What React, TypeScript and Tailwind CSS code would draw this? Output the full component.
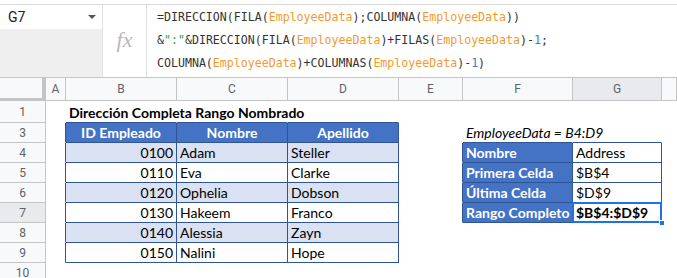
import React from "react";

type Tok = [string, string];
const D = "text-[#333333]";
const O = "text-[#f29a2e]";
const G = "text-[#2e9a44]";
const B = "text-[#3c78d8]";

const formula: Tok[][] = [
  [["=DIRECCION(FILA(", D], ["EmployeeData", O], [");COLUMNA(", D], ["EmployeeData", O], ["))", D]],
  [["&", D], ['":"', G], ["&DIRECCION(FILA(", D], ["EmployeeData", O], [")+FILAS(", D], ["EmployeeData", O], [")-", D], ["1", B], [";", D]],
  [["COLUMNA(", D], ["EmployeeData", O], [")+COLUMNAS(", D], ["EmployeeData", O], [")-", D], ["1", B], [")", D]],
];

const colDefs = [
  { k: "A", w: "w-[20px]" },
  { k: "B", w: "w-[111px]" },
  { k: "C", w: "w-[111px]" },
  { k: "D", w: "w-[111px]" },
  { k: "E", w: "w-[64px]" },
  { k: "F", w: "w-[110px]" },
  { k: "G", w: "w-[89px]" },
  { k: "H", w: "flex-1" },
];

const people = [
  ["0100", "Adam", "Steller"],
  ["0110", "Eva", "Clarke"],
  ["0120", "Ophelia", "Dobson"],
  ["0130", "Hakeem", "Franco"],
  ["0140", "Alessia", "Zayn"],
  ["0150", "Nalini", "Hope"],
];

const info = [
  ["Nombre", "Address"],
  ["Primera Celda", "$B$4"],
  ["Última Celda", "$D$9"],
  ["Rango Completo", "$B$4:$D$9"],
];

type Cell = { text?: string; cls?: string; br?: boolean; bb?: boolean; sel?: boolean };

function cellFor(row: number, col: string): Cell {
  const c: Cell = {};
  if (row === 1) {
    if (col === "B") c.text = "Dirección Completa Rango Nombrado", c.cls = "font-bold text-[13.6px] overflow-visible";
    if (["B", "C", "D"].includes(col)) c.bb = true;
  }
  if (row >= 3 && row <= 9) {
    if (col === "A") c.br = true;
    if (["B", "C", "D"].includes(col)) {
      c.br = true;
      c.bb = true;
    }
  }
  if (row === 3) {
    const h: Record<string, string> = { B: "ID Empleado", C: "Nombre", D: "Apellido" };
    if (h[col]) {
      c.text = h[col];
      c.cls = "bg-[#4472c4] text-white font-bold text-[13.6px] justify-center";
    }
    if (col === "F") c.text = "EmployeeData = B4:D9", c.cls = "italic overflow-visible";
    if (col === "F" || col === "G") c.bb = true;
  }
  if (row >= 4 && row <= 9) {
    const p = people[row - 4];
    const fill = row % 2 === 0 ? "bg-[#d9e1f2]" : "bg-white";
    if (col === "B") c.text = p[0], c.cls = `${fill} justify-end`;
    if (col === "C") c.text = p[1], c.cls = fill;
    if (col === "D") c.text = p[2], c.cls = fill;
  }
  if (row >= 4 && row <= 7) {
    const r = info[row - 4];
    if (col === "E") c.br = true;
    if (col === "F") {
      c.text = r[0];
      c.cls = "bg-[#4472c4] text-white font-bold text-[13.6px]";
      c.br = true;
      c.bb = true;
    }
    if (col === "G") {
      c.text = r[1];
      c.cls = row === 7 ? "bg-white font-bold text-[13.4px]" : "bg-white";
      c.br = true;
      c.bb = true;
      if (row === 7) c.sel = true;
    }
  }
  return c;
}

const rows = [
  { n: 1, h: "h-[22px]" },
  { n: 3, h: "h-[20px]" },
  { n: 4, h: "h-[20px]" },
  { n: 5, h: "h-[20px]" },
  { n: 6, h: "h-[20px]" },
  { n: 7, h: "h-[20px]" },
  { n: 8, h: "h-[20px]" },
  { n: 9, h: "h-[20px]" },
  { n: 10, h: "h-[20px]" },
];

export default function App() {
  return (
    <div className="w-[677px] h-[278px] overflow-hidden bg-white font-[Roboto,Arial,sans-serif]">
      {/* Formula bar */}
      <div className="h-[78px] pt-[4px] border-b border-[#c4c4c4] flex flex-col">
        <div className="flex-1 flex border-t border-[#dadada]">
          <div className="w-[103px] flex flex-col border-r border-[#e0e0e0]">
            <div className="h-[24px] bg-white flex items-center justify-between pl-[8px] pr-[6px]">
              <span className="text-[14px] text-[#222]">G7</span>
              <span className="w-0 h-0 border-l-[4px] border-r-[4px] border-t-[4px] border-l-transparent border-r-transparent border-t-[#555]" />
            </div>
            <div className="flex-1 bg-[#efefef]" />
          </div>
          <div className="w-[44px] border-r border-[#e0e0e0] flex items-center justify-center">
            <span className="font-['Liberation_Serif',serif] italic text-[22px] text-[#b8b8b8] leading-none mb-[2px]">fx</span>
          </div>
          <div className="flex-1 pl-[10px] pt-[1px] font-['DejaVu_Sans_Mono',monospace] text-[11.6px] leading-[23px] whitespace-pre">
            {formula.map((line, i) => (
              <div key={i}>
                {line.map(([t, c], j) => (
                  <span key={j} className={c}>
                    {t}
                  </span>
                ))}
              </div>
            ))}
          </div>
        </div>
      </div>

      {/* Column headers */}
      <div className="flex h-[23px] bg-[#f8f9fa] text-[12px] text-[#5f6368]">
        <div className="w-[46px] border-b-[3px] border-r-[4px] border-[#c4c4c4] bg-[#f8f9fa]" />
        {colDefs.map((c) => (
          <div
            key={c.k}
            className={`${c.w} border-r border-b border-[#c4c4c4] flex items-center justify-center ${
              c.k === "G" ? "bg-[#e8eaed]" : ""
            }`}
          >
            {c.k === "H" ? "" : c.k}
          </div>
        ))}
      </div>

      {/* Body */}
      {rows.map((r) => (
        <div key={r.n} className={`flex ${r.h}`}>
          <div
            className={`w-[46px] border-r border-b border-[#c4c4c4] text-[12px] text-[#5f6368] flex items-center justify-center ${
              r.n === 7 ? "bg-[#e8eaed]" : "bg-[#f8f9fa]"
            }`}
          >
            {r.n}
          </div>
          {colDefs.map((c) => {
            const cell = cellFor(r.n, c.k);
            return (
              <div
                key={c.k}
                className={`${c.w} relative flex items-end pb-[1px] px-[3px] border-r border-b whitespace-nowrap font-[Lato,sans-serif] text-[14px] leading-[17px] text-black ${
                  cell.br ? "border-r-[#2f5597]" : "border-r-transparent"
                } ${cell.bb ? "border-b-[#2f5597]" : "border-b-transparent"} ${cell.cls ?? ""}`}
              >
                <span className="relative z-10">{cell.text}</span>
                {cell.sel && (
                  <>
                    <div className="absolute -left-[1px] -top-[1px] right-[-1px] bottom-[-1px] border-2 border-[#1a73e8]" />
                    <div className="absolute right-[-4px] bottom-[-4px] w-[6px] h-[6px] bg-[#1a73e8] border border-white z-20" />
                  </>
                )}
              </div>
            );
          })}
        </div>
      ))}
    </div>
  );
}
